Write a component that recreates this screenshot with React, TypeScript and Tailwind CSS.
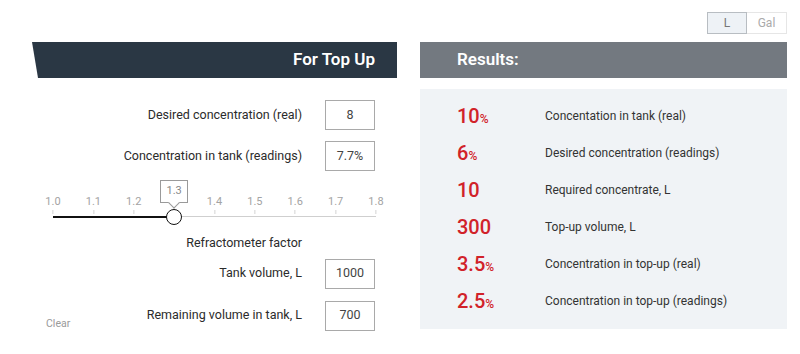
import React from "react";

const ticks = ["1.0", "1.1", "1.2", "1.3", "1.4", "1.5", "1.6", "1.7", "1.8"];

const results = [
  { value: "10", pct: true, label: "Concentation in tank (real)" },
  { value: "6", pct: true, label: "Desired concentration (readings)" },
  { value: "10", pct: false, label: "Required concentrate, L" },
  { value: "300", pct: false, label: "Top-up volume, L" },
  { value: "3.5", pct: true, label: "Concentration in top-up (real)" },
  { value: "2.5", pct: true, label: "Concentration in top-up (readings)" },
];

function Field({ label, value, className = "" }: { label: string; value: string; className?: string }) {
  return (
    <div className={`flex items-center justify-end pr-[22px] ${className}`}>
      <span className="text-[12.5px] text-[#2b2b2b] mr-[23px]">{label}</span>
      <div className="w-[50px] h-[30px] border border-[#a9a9a9] flex items-center justify-center text-[12.5px] text-[#444]">
        {value}
      </div>
    </div>
  );
}

function Slider() {
  // 1.0 .. 1.8, current 1.3
  const value = 1.3;
  const pos = ((value - 1.0) / 0.8) * 100;
  return (
    <div className="relative h-[56px] mx-[21px] w-[323px]">
      {ticks.map((t, i) => (
        <div
          key={t}
          className="absolute top-[24px] -translate-x-1/2 flex flex-col items-center"
          style={{ left: `${(i / 8) * 100}%` }}
        >
          <span className={`text-[11px] leading-[14px] text-[#a3a3a3] ${t === "1.3" ? "invisible" : ""}`}>{t}</span>
          <span className="w-px h-[4px] bg-[#d4d4d4] mt-[1px]" />
        </div>
      ))}
      <div className="absolute left-0 right-0 top-[45px] h-px bg-[#cfcfcf]" />
      <div className="absolute left-0 top-[45px] h-[2px] bg-[#111]" style={{ width: `${pos}%` }} />
      <div
        className="absolute top-[38px] w-[16px] h-[16px] -translate-x-1/2 rounded-full border-[1.5px] border-[#111] bg-white"
        style={{ left: `${pos}%` }}
      />
      <div
        className="absolute top-[9px] w-[28px] h-[23px] -translate-x-1/2 border border-[#9a9a9a] bg-white flex items-center justify-center text-[11px] text-[#888]"
        style={{ left: `${pos}%` }}
      >
        1.3
        <span className="absolute -bottom-[5px] left-1/2 -translate-x-1/2 w-[8px] h-[8px] rotate-45 bg-white border-r border-b border-[#9a9a9a]" />
      </div>
    </div>
  );
}

export default function App() {
  return (
    <div className="relative w-[800px] h-[354px] bg-white overflow-hidden font-['Roboto',sans-serif]">
      <div className="flex justify-end pt-[12px] pr-[13px]">
        <button className="w-10 h-[22px] border border-[#b8bdc2] bg-[#eef2f6] text-[12px] text-[#777]">L</button>
        <button className="w-10 h-[22px] border border-l-0 border-[#e6e6e6] bg-white text-[12px] text-[#aaa]">Gal</button>
      </div>

      <div className="flex pl-8 mt-[8px] gap-[23px]">
        <div className="w-[365px] flex flex-col">
          <div className="h-9 bg-[#2a3744] [clip-path:polygon(0_0,100%_0,100%_100%,6px_100%)] flex items-center justify-end pr-[22px]">
            <span className="text-white font-semibold text-[17px]">For Top Up</span>
          </div>
          <Field label="Desired concentration (real)" value="8" className="mt-[22px]" />
          <Field label="Concentration in tank (readings)" value="7.7%" className="mt-[11px]" />
          <Slider />
          <div className="flex justify-end pr-[95px] mt-[7px]">
            <span className="text-[12.5px] text-[#2b2b2b]">Refractometer factor</span>
          </div>
          <Field label="Tank volume, L" value="1000" className="mt-[6px]" />
          <div className="flex items-end mt-[12px]">
            <span className="ml-[14px] translate-y-[1px] text-[10.5px] text-[#9a9a9a]">Clear</span>
            <Field label="Remaining volume in tank, L" value="700" className="flex-1" />
          </div>
        </div>

        <div className="w-[367px] flex flex-col">
          <div className="h-9 bg-[#737980] flex items-center pl-[37px]">
            <span className="text-white font-semibold text-[17px]">Results:</span>
          </div>
          <div className="mt-[11px] h-[240px] bg-[#f0f3f6] pt-[8px]">
            {results.map((r) => (
              <div key={r.label} className="h-[37px] flex items-center">
                <div className="w-[125px] pl-[37px] text-[#d12229] whitespace-nowrap">
                  <span className="text-[20px] font-medium">{r.value}</span>
                  {r.pct && <span className="text-[12px] font-medium">%</span>}
                </div>
                <span className="text-[12px] text-[#333]">{r.label}</span>
              </div>
            ))}
          </div>
        </div>
      </div>
    </div>
  );
}
